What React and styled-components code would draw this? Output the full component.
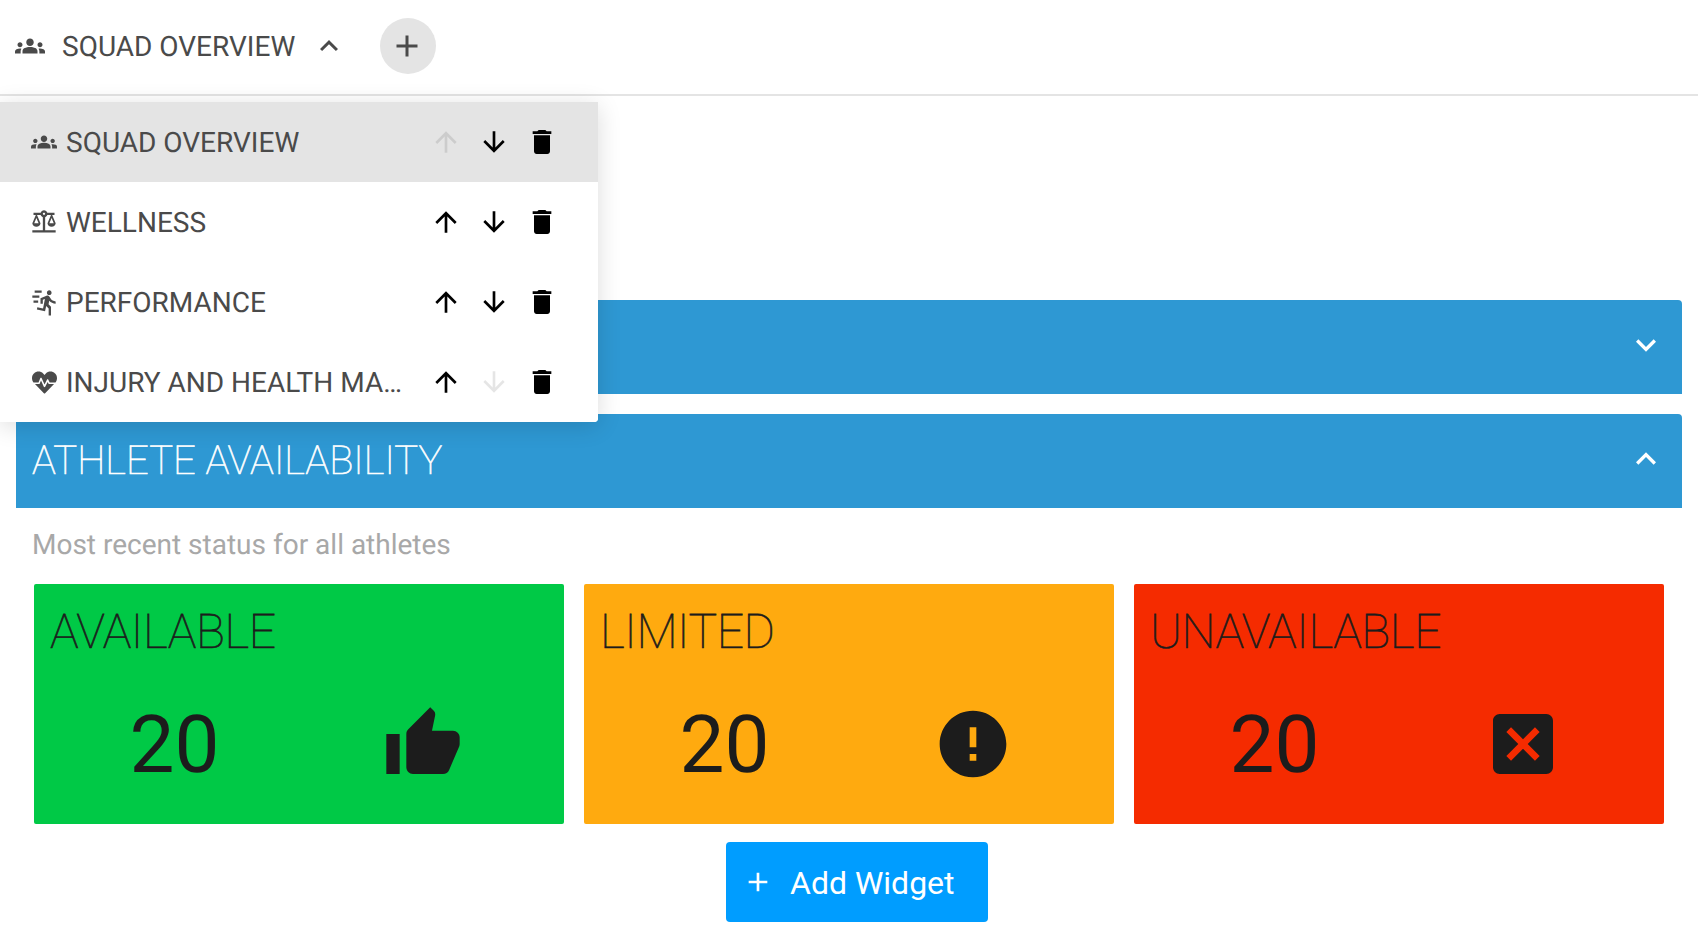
import React from "react";
import styled, { createGlobalStyle } from "styled-components";
import {
  MdGroups, MdExpandLess, MdExpandMore, MdAdd, MdArrowUpward, MdArrowDownward,
  MdDelete, MdThumbUp, MdError, MdOutlineBalance,
} from "react-icons/md";
import { FaHeartbeat } from "react-icons/fa";

const Global = createGlobalStyle`
  html, body { margin: 0; padding: 0; background: #fff; }
  body { font-family: Roboto, "Liberation Sans", sans-serif; overflow: hidden; text-rendering: geometricPrecision; }
  * { box-sizing: border-box; }
`;

const Page = styled.div`
  position: relative;
  width: 1698px;
  height: 944px;
  overflow: hidden;
`;

const TabBar = styled.header`
  height: 96px;
  display: flex;
  align-items: center;
  padding: 0 16px 2px 15px;
  border-bottom: 2px solid #e4e4e4;
  color: #4a4a4a;
`;

const TabIcon = styled(MdGroups)`
  font-size: 30px;
  margin-right: 17px;
`;

const TabTitle = styled.span`
  font-size: 28px;
  line-height: 36px;
  padding-top: 2px;
`;

const TabChevron = styled(MdExpandLess)`
  font-size: 36px;
  margin-left: 16px;
`;

const AddTabButton = styled.button`
  width: 56px;
  height: 56px;
  border: 0;
  border-radius: 50%;
  margin-left: 33px;
  padding: 0 2px 0 0;
  background: #e4e4e4;
  color: #4a4a4a;
  display: flex;
  align-items: center;
  justify-content: center;
  font-size: 36px;
`;

const Menu = styled.ul`
  position: absolute;
  top: 102px;
  left: 0;
  width: 598px;
  margin: 0;
  padding: 0;
  list-style: none;
  background: #fff;
  border-radius: 0 0 4px 0;
  box-shadow: 0 4px 24px rgba(0, 0, 0, 0.14);
  overflow: hidden;
  z-index: 5;
`;

const MenuRow = styled.li`
  height: 80px;
  display: flex;
  align-items: center;
  padding: 0 40px 0 30px;
  background: ${(p) => (p.$active ? "#e4e4e4" : "#fff")};
  color: #4a4a4a;
`;

const RowIcon = styled.span`
  width: 28px;
  height: 28px;
  flex: none;
  margin-right: 8px;
  font-size: ${(p) => p.$size || 28}px;
  display: flex;
  align-items: center;
  justify-content: center;
`;

const RowLabel = styled.span`
  flex: 1;
  min-width: 0;
  font-size: 28px;
  line-height: 36px;
  padding-top: 2px;
  white-space: nowrap;
  overflow: hidden;
  text-overflow: ellipsis;
`;

const RowActions = styled.div`
  display: flex;
  align-items: center;
  gap: 16px;
  margin-left: 8px;
  flex: none;
`;

const ActionIcon = styled.span`
  width: 32px;
  height: 32px;
  font-size: 32px;
  display: flex;
  color: ${(p) => (p.$faded ? "rgba(0, 0, 0, 0.1)" : "#000")};
`;

const Content = styled.main`
  padding: 204px 16px 0 16px;
  display: flex;
  flex-direction: column;
`;

const SectionBar = styled.div`
  height: 94px;
  margin-bottom: 20px;
  padding: 0 16px;
  display: flex;
  align-items: center;
  justify-content: space-between;
  background: #2e98d3;
  color: #fff;
  border-radius: 4px 4px 0 0;
`;

const SectionTitle = styled.h2`
  margin: 0;
  font-size: 40px;
  font-weight: 100;
  line-height: 48px;
  -webkit-text-stroke: 0.6px currentColor;
`;

const SectionChevron = styled.span`
  display: flex;
  font-size: 40px;
  margin-bottom: 4px;
`;

const Caption = styled.p`
  margin: 0 0 22px 16px;
  font-size: 28px;
  line-height: 34px;
  color: #a8a8a8;
`;

const Cards = styled.div`
  display: grid;
  grid-template-columns: repeat(3, 530px);
  gap: 20px;
  padding-left: 18px;
`;

const Card = styled.div`
  height: 240px;
  padding: 20px 16px 16px;
  background: ${(p) => p.$bg};
  color: #1c1c1c;
  border-radius: 2px;
  display: flex;
  flex-direction: column;
`;

const CardTitle = styled.div`
  font-size: 48px;
  font-weight: 100;
  line-height: 56px;
  letter-spacing: -0.45px;
  -webkit-text-stroke: 0.6px currentColor;
`;

const CardBody = styled.div`
  display: grid;
  grid-template-columns: 1fr 1fr;
  align-items: center;
  justify-items: center;
  margin-top: 38px;
`;

const CardCount = styled.div`
  font-size: 80px;
  line-height: 94px;
  font-weight: 400;
`;

const CardIcon = styled.span`
  display: flex;
  font-size: 80px;
  padding: 0 1px 2px 0;
`;

const AddWidget = styled.button`
  align-self: center;
  margin: 18px 0 0 16px;
  width: 262px;
  height: 80px;
  border: 0;
  border-radius: 4px;
  padding: 0 0 0 16px;
  background: #009dff;
  color: #fff;
  display: flex;
  align-items: center;
  gap: 16px;
  font: 400 32px Roboto, sans-serif;
`;

const AddWidgetLabel = styled.span`
  padding-top: 2px;
`;

const UnavailableGlyph = () => (
  <svg viewBox="0 0 24 24" width="1em" height="1em" fill="currentColor">
    <path d="M19 3H5c-1.1 0-2 .9-2 2v14c0 1.1.9 2 2 2h14c1.1 0 2-.9 2-2V5c0-1.1-.9-2-2-2zm-2 12.59L15.59 17 12 13.41 8.41 17 7 15.59 10.59 12 7 8.41 8.41 7 12 10.59 15.59 7 17 8.41 13.41 12 17 15.59z" />
  </svg>
);

const SprintGlyph = () => (
  <svg viewBox="0 0 24 24" width="1em" height="1em" fill="currentColor">
    <path transform="translate(3 0.5)" d="M13.49 5.48c1.1 0 2-.9 2-2s-.9-2-2-2-2 .9-2 2 .9 2 2 2zm-3.6 13.9l1-4.4 2.1 2v6h2v-7.5l-2.1-2 .6-3c1.3 1.5 3.3 2.5 5.5 2.5v-2c-1.9 0-3.5-1-4.3-2.4l-1-1.6c-.4-.6-1-1-1.7-1-.3 0-.5.1-.8.1l-5.2 2.2v4.7h2v-3.4l1.8-.7-1.6 8.1-4.9-1-.4 2 7 1.4z" />
    <path d="M4 2.2h6v1.8H4zM2 6.5h6v1.8H2zM3 10.8h4v1.8H3z" />
  </svg>
);

const rows = [
  { label: "SQUAD OVERVIEW", icon: <MdGroups />, iconSize: 26, active: true, upOff: true },
  { label: "WELLNESS", icon: <MdOutlineBalance /> },
  { label: "PERFORMANCE", icon: <SprintGlyph /> },
  { label: "INJURY AND HEALTH MANAGEMENT", icon: <FaHeartbeat />, iconSize: 25, downOff: true },
];

const cards = [
  { title: "AVAILABLE", bg: "#00c946", icon: <MdThumbUp /> },
  { title: "LIMITED", bg: "#ffaa0f", icon: <MdError /> },
  { title: "UNAVAILABLE", bg: "#f52b00", icon: <UnavailableGlyph /> },
];

export default function App() {
  return (
    <Page>
      <Global />
      <TabBar>
        <TabIcon />
        <TabTitle>SQUAD OVERVIEW</TabTitle>
        <TabChevron />
        <AddTabButton><MdAdd /></AddTabButton>
      </TabBar>
      <Menu>
        {rows.map((r) => (
          <MenuRow key={r.label} $active={r.active}>
            <RowIcon $size={r.iconSize}>{r.icon}</RowIcon>
            <RowLabel>{r.label}</RowLabel>
            <RowActions>
              <ActionIcon $faded={r.upOff}><MdArrowUpward /></ActionIcon>
              <ActionIcon $faded={r.downOff}><MdArrowDownward /></ActionIcon>
              <ActionIcon><MdDelete /></ActionIcon>
            </RowActions>
          </MenuRow>
        ))}
      </Menu>
      <Content>
        <SectionBar>
          <SectionTitle>&nbsp;</SectionTitle>
          <SectionChevron><MdExpandMore /></SectionChevron>
        </SectionBar>
        <SectionBar>
          <SectionTitle>ATHLETE AVAILABILITY</SectionTitle>
          <SectionChevron><MdExpandLess /></SectionChevron>
        </SectionBar>
        <Caption>Most recent status for all athletes</Caption>
        <Cards>
          {cards.map((c) => (
            <Card key={c.title} $bg={c.bg}>
              <CardTitle>{c.title}</CardTitle>
              <CardBody>
                <CardCount>20</CardCount>
                <CardIcon>{c.icon}</CardIcon>
              </CardBody>
            </Card>
          ))}
        </Cards>
        <AddWidget><MdAdd /><AddWidgetLabel>Add Widget</AddWidgetLabel></AddWidget>
      </Content>
    </Page>
  );
}
